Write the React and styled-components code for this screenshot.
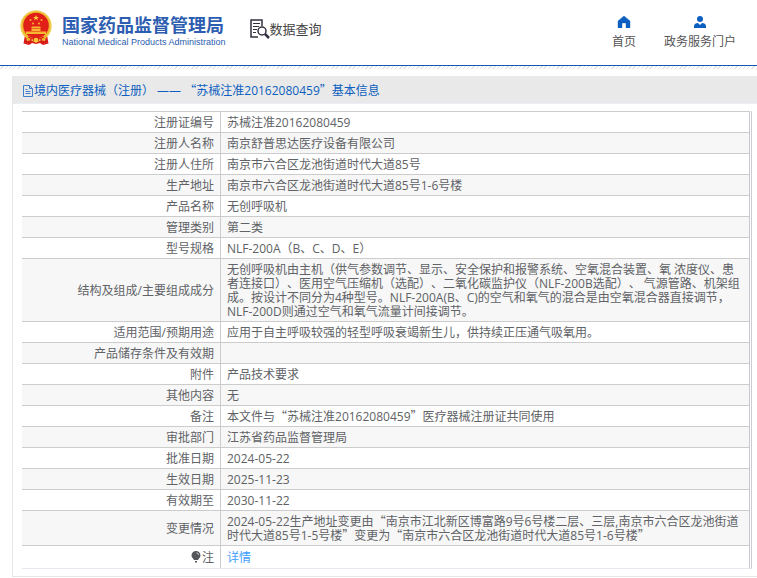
import React from "react";
import styled, { createGlobalStyle, css } from "styled-components";

const cjk = '"Noto Sans CJK SC"';

const GlobalStyle = createGlobalStyle`
  *, *::before, *::after { box-sizing: border-box; }
  body {
    margin: 0;
    background: #fff;
    color: #606266;
    font: 12px/14px "Open Sans", ${cjk}, sans-serif;
    text-spacing-trim: space-all;
  }
`;

const Header = styled.header`
  display: flex;
  align-items: flex-start;
  height: 66px;
  padding: 0 21px 0 20px;
  border-bottom: 1px solid #1059ac;
`;

const Stripe = styled.div`
  height: 3px;
  background: repeating-linear-gradient(135deg, #fff 0 2px, #e3e3e3 2px 3px);
`;

const Brand = styled.a`
  display: flex;
  gap: 10px;
  padding-top: 10px;
  color: #2c5db0;
  text-decoration: none;
`;

const BrandText = styled.span`
  display: flex;
  flex-direction: column;
  padding-top: 2px;
  white-space: nowrap;
`;

const BrandName = styled.strong`
  font: 700 18px/24px ${cjk}, sans-serif;
`;

const BrandEnglish = styled.span`
  font: 400 9px/12px "Liberation Sans", sans-serif;
`;

const Query = styled.h1`
  display: flex;
  align-items: center;
  margin: 19px 0 0 24px;
  color: #444;
  font: 400 13px/20px ${cjk}, sans-serif;
  white-space: nowrap;
`;

const Nav = styled.nav`
  display: flex;
  gap: 28px;
  margin: 16px 0 0 auto;
`;

const NavLink = styled.a`
  display: flex;
  flex-direction: column;
  align-items: center;
  gap: 5px;
  color: #555;
  line-height: 18px;
  text-decoration: none;
  white-space: nowrap;
`;

const Panel = styled.main`
  margin: 7px 0 0 12px;
  border: solid #e6e6e6;
  border-width: 0 0 1px 1px;
`;

const PanelTitle = styled.h2`
  display: flex;
  align-items: center;
  height: 28px;
  margin: 0;
  padding: 2px 0 0 9px;
  background: #e9e9e9;
  border-bottom: 1px solid #ebeef5;
  color: #0c5fc0;
  font-size: 12px;
  font-weight: 400;
  white-space: pre;
`;

const TableFrame = styled.div`
  margin: 7px 5px 7px 9px;
  padding-right: 1px;
  border-right: 1px solid #ccccd0;
  border-bottom: 1px solid #e6e9f0;
`;

const Table = styled.table`
  width: 100%;
  border-spacing: 0;
  border-right: 1px solid #c8c8cc;
  table-layout: fixed;
`;

const cell = css`
  padding: 4px 6px 2px;
  border-top: 1px solid #ccc;
  font-weight: 400;
  overflow-wrap: break-word;
`;

const Label = styled.th`
  ${cell}
  width: 199px;
  border-right: 1px solid #ccc;
  text-align: right;
`;

const Value = styled.td`
  ${cell}
  height: ${(p) => (p.$tall ? 23 : 21)}px;
  padding-right: 5px;
`;

const Row = styled.tr`
  &:nth-child(even) { background: #f7f7f7; }
  &:last-child { background: #fff; }
`;

const DetailLink = styled.a`
  color: #409eff;
  text-decoration: none;
`;

const Quote = styled.span`
  font-family: ${cjk}, sans-serif;
  line-height: 1;
`;

const BulbIcon = styled.svg`
  vertical-align: -1px;
`;

/* Quotation marks take the full-width form of the Chinese face. */
const Words = ({ children }) =>
  children
    .split(/([“”])/)
    .map((part, i) => (/[“”]/.test(part) ? <Quote key={i}>{part}</Quote> : part));

const Emblem = () => (
  <svg width="32" height="36" viewBox="0 0 32 36" aria-hidden="true">
    <path d="M5 25 3.5 33.5 9 35l3-2 4 1 4-1 3 2 5.5-1.5L27 25Z" fill="#d91f1a" />
    <circle cx="16" cy="16" r="15.5" fill="#edb92e" />
    <circle cx="16" cy="16" r="14.8" fill="none" stroke="#f8d65c" strokeDasharray="2 1" />
    <circle cx="16" cy="15.5" r="12.8" fill="#df1f18" />
    <path d="m16 5 .8 2h2.1l-1.7 1.3.6 2L16 9.1l-1.8 1.2.6-2L13.1 7h2.1Z" fill="#ffd23e" />
    <g fill="#f9b52f">
      <circle cx="10.5" cy="10" r="1" />
      <circle cx="21.5" cy="10" r="1" />
      <circle cx="13" cy="13.5" r="1" />
      <circle cx="19" cy="13.5" r="1" />
      <path d="m11 18 1-1.5h8l1 1.5ZM11.5 18.5h9V21h-9ZM6 21.5h20V24H6Z" />
    </g>
    <path d="M6 26c3 3.5 6 4 8 2.5h4c2 1.5 5 1 8-2.5l-1 5-5-1-4 3-4-3-5 1Z" fill="#efbc30" />
    <path d="M8 27c3 2 5 2 8 1 3 1 5 1 8-1M11 29l-1 5m11-5 1 5M13 30h6" fill="none" stroke="#d91f1a" strokeWidth="1.5" />
    <circle cx="16" cy="30" r="2.3" fill="#f5c83b" />
  </svg>
);

const QueryIcon = () => (
  <svg width="20" height="20" viewBox="0 0 20 20" fill="none" stroke="#34313f" aria-hidden="true">
    <path d="M12 7V1H1v17h7" strokeWidth="1.5" />
    <path d="M3 4.5h7M3 7.5h6M3 10.5h4M3 13.5h3" />
    <circle cx="12" cy="12" r="4" strokeWidth="1.5" />
    <path d="m15 15 4 4" strokeWidth="2.5" />
  </svg>
);

const HomeIcon = () => (
  <svg width="14" height="12" viewBox="0 0 14 12" fill="#0b5fc1" aria-hidden="true">
    <path d="M7 0 1 5v7h4V7h4v5h4V5Z" stroke="#0b5fc1" strokeWidth=".4" strokeLinejoin="round" />
  </svg>
);

const UserIcon = () => (
  <svg width="14" height="12" viewBox="0 0 14 12" fill="#0b5fc1" aria-hidden="true">
    <circle cx="7" cy="3" r="3" />
    <path d="M1 12V10c0-2 2-3 4-3l2 2 2-2c2 0 4 1 4 3v2Z" />
  </svg>
);

const DocIcon = () => (
  <svg width="12" height="12" viewBox="0 0 12 12" fill="none" stroke="#3f7fce" aria-hidden="true">
    <path d="M1.5.5h6l3 3v8h-9ZM7.5.5v3h3M3.5 4.5h2M3.5 6.5h5M3.5 8.5h5" />
  </svg>
);

const Bulb = () => (
  <BulbIcon width="12" height="12" viewBox="0 0 12 12" aria-hidden="true">
    <path d="M6 0a4.5 4.5 0 0 0-4.5 4.5c0 2.2 2 3 2.500 4.500h4c.5-1.500 2.500-2.300 2.500-4.500A4.500 4.500 0 0 0 6 0ZM5 10h2v1.500H5Z" fill="#55565a" />
    <path d="M6.500 2C8 2 8.500 3 8.500 4" fill="none" stroke="#ddd" />
  </BulbIcon>
);

const records = [
  ["注册证编号", "苏械注准20162080459"],
  ["注册人名称", "南京舒普思达医疗设备有限公司"],
  ["注册人住所", "南京市六合区龙池街道时代大道85号"],
  ["生产地址", "南京市六合区龙池街道时代大道85号1-6号楼"],
  ["产品名称", "无创呼吸机"],
  ["管理类别", "第二类"],
  ["型号规格", "NLF-200A（B、C、D、E）"],
  [
    "结构及组成/主要组成成分",
    "无创呼吸机由主机（供气参数调节、显示、安全保护和报警系统、空氧混合装置、氧 浓度仪、患者连接口）、医用空气压缩机（选配）、二氧化碳监护仪（NLF-200B选配）、 气源管路、机架组成。按设计不同分为4种型号。NLF-200A(B、C)的空气和氧气的混合是由空氧混合器直接调节，NLF-200D则通过空气和氧气流量计间接调节。",
  ],
  ["适用范围/预期用途", "应用于自主呼吸较强的轻型呼吸衰竭新生儿，供持续正压通气吸氧用。"],
  ["产品储存条件及有效期", ""],
  ["附件", "产品技术要求"],
  ["其他内容", "无"],
  ["备注", "本文件与“苏械注准20162080459”医疗器械注册证共同使用"],
  ["审批部门", "江苏省药品监督管理局"],
  ["批准日期", "2024-05-22"],
  ["生效日期", "2025-11-23"],
  ["有效期至", "2030-11-22"],
  [
    "变更情况",
    "2024-05-22生产地址变更由“南京市江北新区博富路9号6号楼二层、三层,南京市六合区龙池街道时代大道85号1-5号楼”变更为“南京市六合区龙池街道时代大道85号1-6号楼”",
  ],
];

export default function App() {
  return (
    <>
      <GlobalStyle />
      <Header>
        <Brand href="#">
          <Emblem />
          <BrandText>
            <BrandName>国家药品监督管理局</BrandName>
            <BrandEnglish>National Medical Products Administration</BrandEnglish>
          </BrandText>
        </Brand>
        <Query>
          <QueryIcon />
          数据查询
        </Query>
        <Nav>
          <NavLink href="#">
            <HomeIcon />
            首页
          </NavLink>
          <NavLink href="#">
            <UserIcon />
            政务服务门户
          </NavLink>
        </Nav>
      </Header>
      <Stripe />
      <Panel>
        <PanelTitle>
          <DocIcon />
          <span>
            <Words>{"境内医疗器械（注册） —— “苏械注准20162080459”基本信息"}</Words>
          </span>
        </PanelTitle>
        <TableFrame>
          <Table>
            <tbody>
              {records.map(([label, value]) => (
                <Row key={label}>
                  <Label scope="row">{label}</Label>
                  <Value>
                    <Words>{value}</Words>
                  </Value>
                </Row>
              ))}
              <Row>
                <Label scope="row">
                  <Bulb />注
                </Label>
                <Value $tall>
                  <DetailLink href="#">详情</DetailLink>
                </Value>
              </Row>
            </tbody>
          </Table>
        </TableFrame>
      </Panel>
    </>
  );
}
